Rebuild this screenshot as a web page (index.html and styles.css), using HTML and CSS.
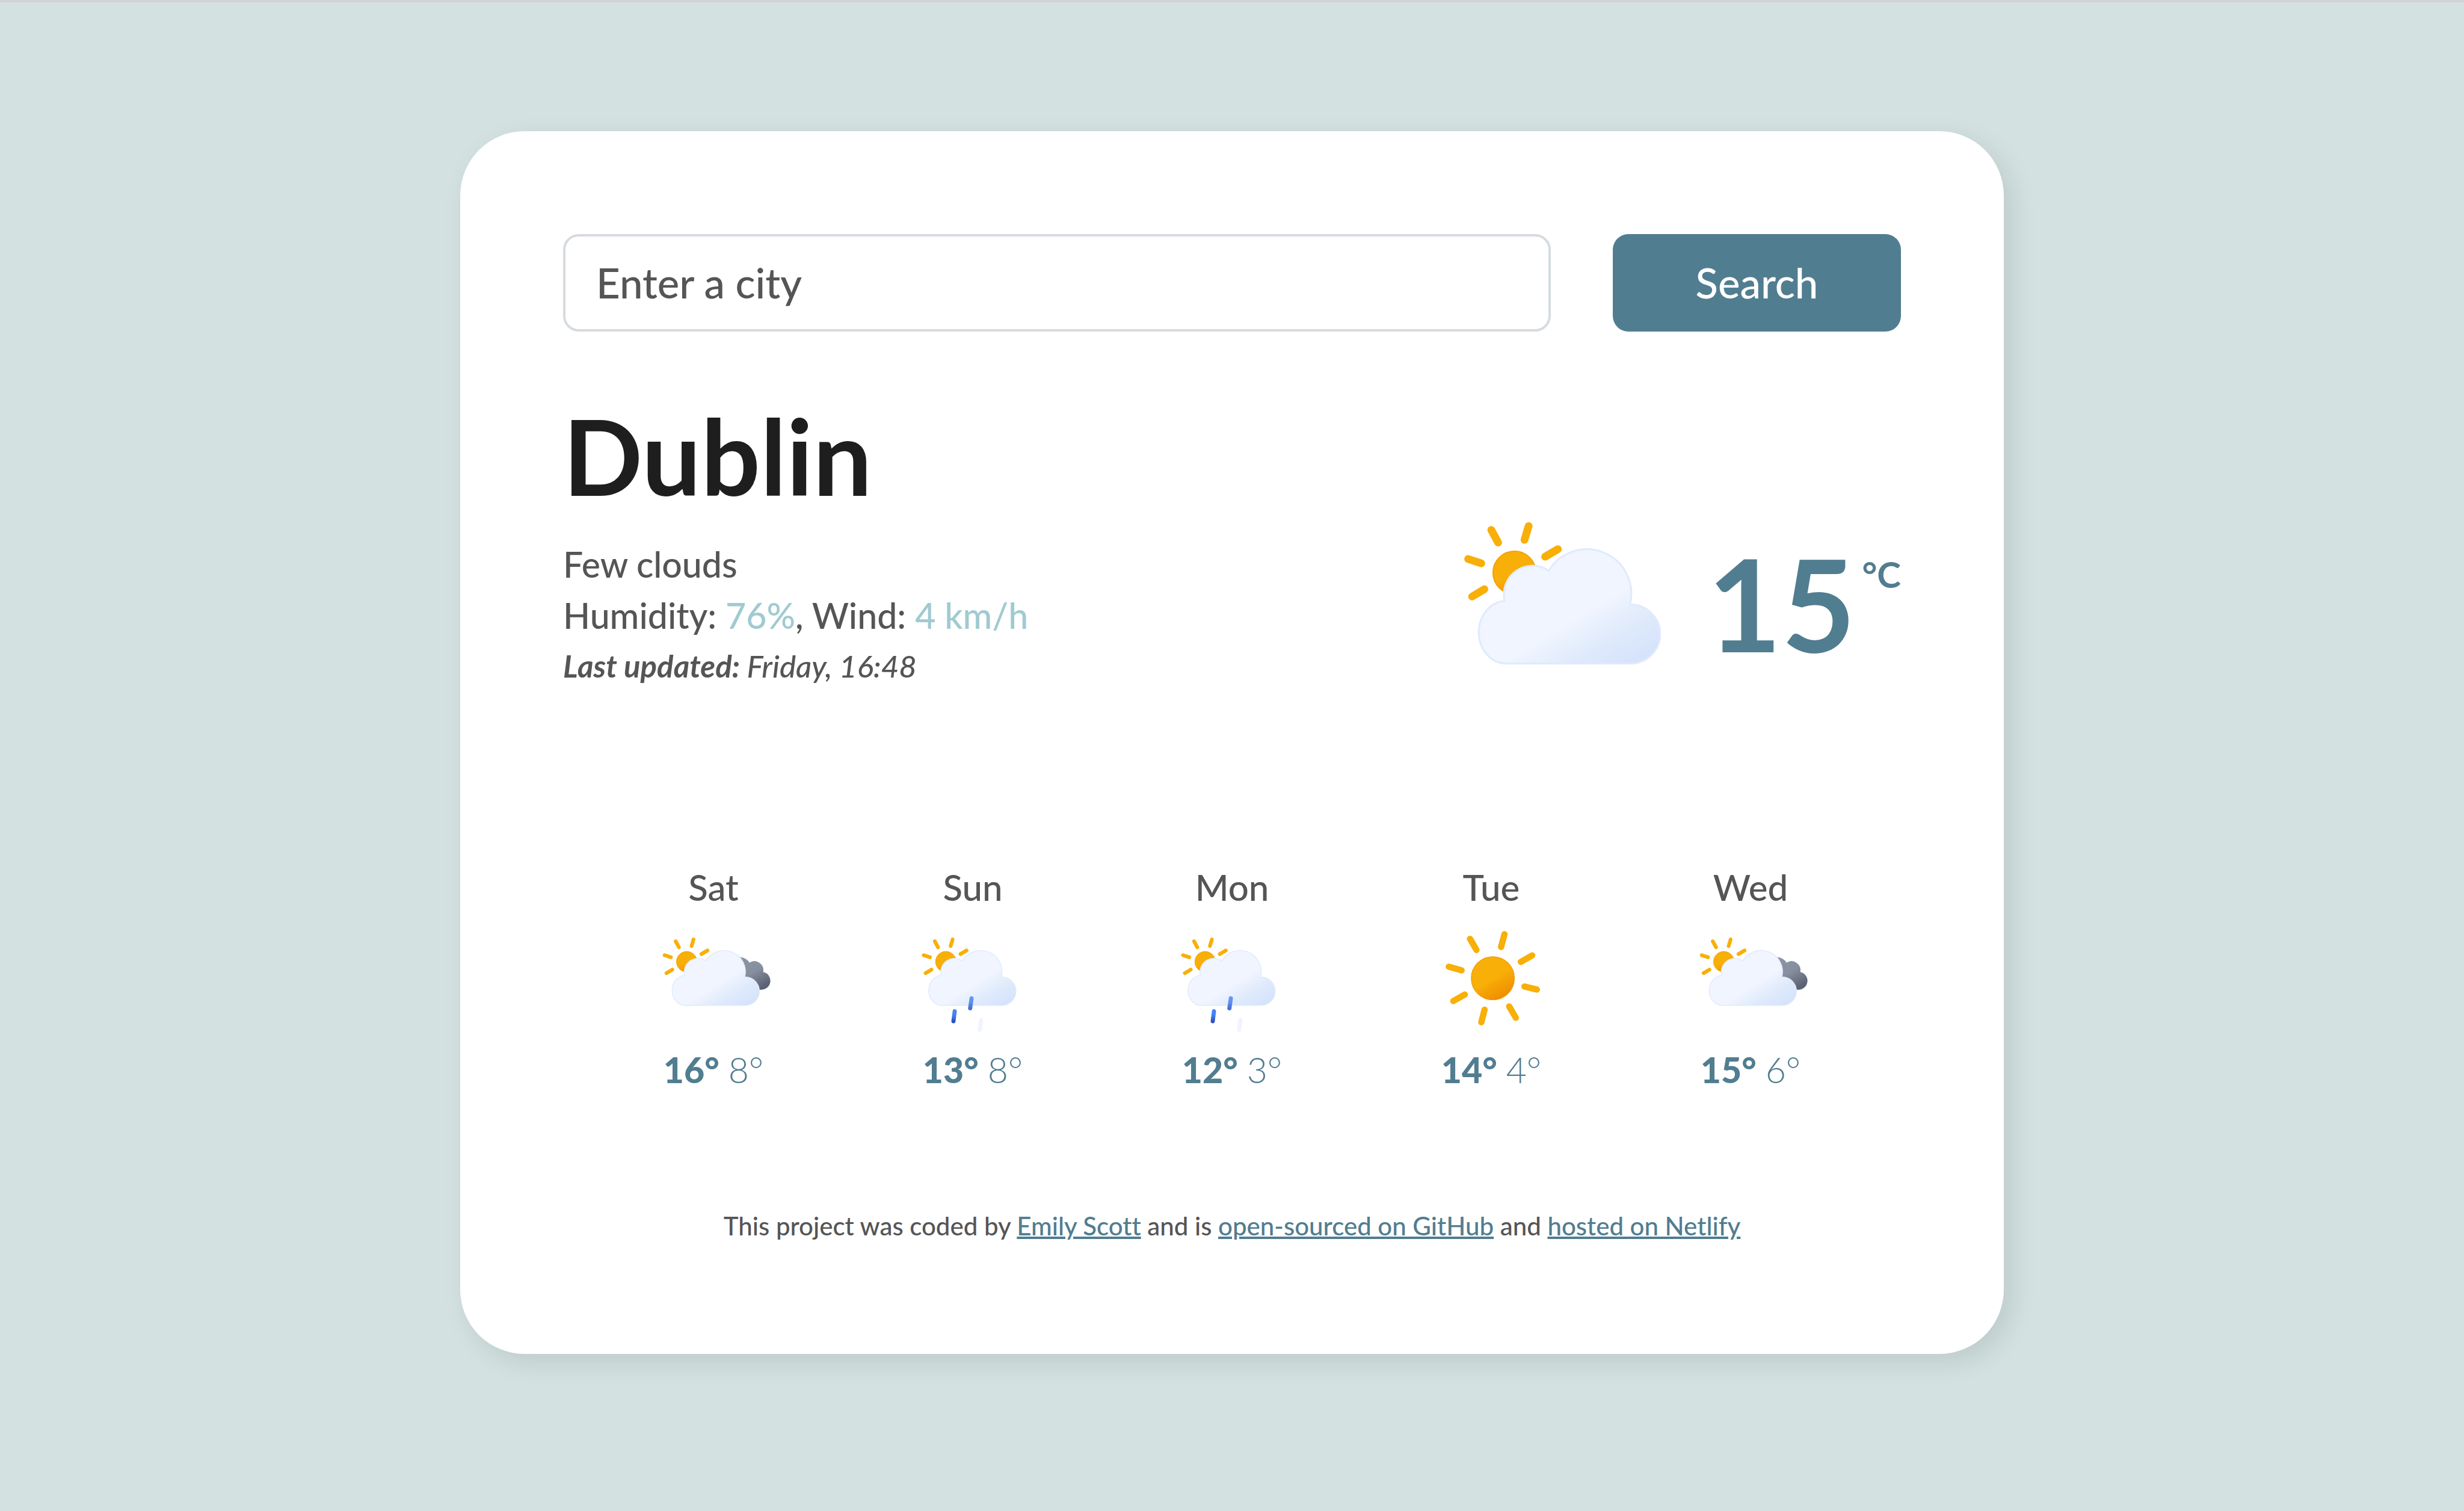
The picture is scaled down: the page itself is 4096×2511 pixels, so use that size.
FILE: index.html
```html
<!DOCTYPE html>
<html lang="en">
<head>
<meta charset="utf-8">
<title>Weather</title>
<link rel="stylesheet" href="styles.css">
</head>
<body>
<svg class="defs" aria-hidden="true">
  <defs>
    <linearGradient id="cloud" gradientUnits="userSpaceOnUse" x1="690" y1="670" x2="889" y2="995">
      <stop offset="0" stop-color="#f0f5ff"/><stop offset="0.5" stop-color="#dfeafb"/><stop offset="1" stop-color="#d5e3fb"/>
    </linearGradient>
    <linearGradient id="sun" x1="0.25" y1="0.07" x2="0.75" y2="0.93">
      <stop offset="0" stop-color="#f8af07"/><stop offset="0.5" stop-color="#f8af07"/><stop offset="1" stop-color="#ef8d00"/>
    </linearGradient>
    <linearGradient id="dark" x1="0.25" y1="0.07" x2="0.75" y2="0.93">
      <stop offset="0" stop-color="#8a94a3"/><stop offset="0.45" stop-color="#868f9e"/><stop offset="1" stop-color="#5b6273"/>
    </linearGradient>
    <linearGradient id="rain" x1="0" y1="0" x2="0" y2="1">
      <stop offset="0" stop-color="#4286f4"/><stop offset="0.4" stop-color="#4380f0"/><stop offset="1" stop-color="#2a52c0"/>
    </linearGradient>
    <linearGradient id="rain-light" x1="0" y1="0" x2="0" y2="1">
      <stop offset="0" stop-color="#6496f6"/><stop offset="0.4" stop-color="#5f8ff2"/><stop offset="1" stop-color="#456fd0"/>
    </linearGradient>
    <g id="half-sun">
      <circle cx="385" cy="390" r="120" fill="url(#sun)" stroke="#f5a000" stroke-width="6"/>
      <path d="M256 152 294 222M464 130 441 207M627 259 556 301M127 314 200 338M149 523 217 482" fill="none" stroke="#f8af07" stroke-width="43" stroke-linecap="round"/>
    </g>
    <path id="cloud-shape" d="M347 896A152 174 0 0 1 330 548A160 160 0 0 1 576 379A248 248 0 0 1 1029 567A166 164 0 0 1 1033 896Z" fill="url(#cloud)" stroke="#e0eafb" stroke-width="10" stroke-linejoin="round"/>
    <symbol id="few-clouds" viewBox="105 107 1096 796">
      <use href="#half-sun"/>
      <use href="#cloud-shape"/>
    </symbol>
    <symbol id="broken-clouds" viewBox="8 0 720 720">
      <use href="#half-sun" transform="translate(34 59) scale(0.477)"/>
      <path d="M500 220A66 66 0 0 1 567 250A50 50 0 0 1 643 302A50 50 0 0 1 632 401H520Z" fill="url(#dark)"/>
      <use href="#cloud-shape" transform="translate(47 58) scale(0.48)"/>
    </symbol>
    <symbol id="rain-cloud" viewBox="8 0 720 720">
      <use href="#half-sun" transform="translate(33 59) scale(0.477)"/>
      <use href="#cloud-shape" transform="translate(32 58) scale(0.48)"/>
      <g fill="none" stroke-width="23" stroke-linecap="round">
        <path d="M266 521 259 576" stroke="url(#rain)"/>
        <path d="M360 449 352 504" stroke="url(#rain-light)"/>
        <path d="M413 570 406 624" stroke="#eff4fe"/>
      </g>
    </symbol>
    <symbol id="clear-sky" viewBox="8 0 720 720">
      <circle cx="375" cy="337" r="120" fill="url(#sun)" stroke="#f39b00" stroke-width="4"/>
      <path d="M248 118 284 180M440 92 421 163M594 210 531 246M551 383 620 400M466 494 503 557M329 512 311 582M219 428 155 464M130 273 201 293" fill="none" stroke="#f8af07" stroke-width="35" stroke-linecap="round"/>
    </symbol>
  </defs>
</svg>
<main class="card">
  <form class="search">
    <input class="search-input" type="text" placeholder="Enter a city" aria-label="City">
    <button class="search-button" type="button">Search</button>
  </form>
  <section class="current">
    <div class="details">
      <h1 class="city">Dublin</h1>
      <p class="line">Few clouds</p>
      <p class="line">Humidity: <span class="value">76%</span>, Wind: <span class="value">4 km/h</span></p>
      <p class="updated"><strong>Last updated:</strong> Friday, 16:48</p>
    </div>
    <div class="reading">
      <svg class="reading-icon" role="img" aria-label="Few clouds"><use href="#few-clouds"/></svg>
      <span class="temperature">15</span>
      <span class="unit">°C</span>
    </div>
  </section>
  <section class="forecast">
    <div class="day">
      <div class="day-name">Sat</div>
      <svg class="day-icon" role="img" aria-label="Broken clouds"><use href="#broken-clouds"/></svg>
      <div class="temps"><span class="high">16°</span> <span class="low">8°</span></div>
    </div>
    <div class="day">
      <div class="day-name">Sun</div>
      <svg class="day-icon" role="img" aria-label="Rain"><use href="#rain-cloud"/></svg>
      <div class="temps"><span class="high">13°</span> <span class="low">8°</span></div>
    </div>
    <div class="day">
      <div class="day-name">Mon</div>
      <svg class="day-icon" role="img" aria-label="Rain"><use href="#rain-cloud"/></svg>
      <div class="temps"><span class="high">12°</span> <span class="low">3°</span></div>
    </div>
    <div class="day">
      <div class="day-name">Tue</div>
      <svg class="day-icon" role="img" aria-label="Clear sky"><use href="#clear-sky"/></svg>
      <div class="temps"><span class="high">14°</span> <span class="low">4°</span></div>
    </div>
    <div class="day">
      <div class="day-name">Wed</div>
      <svg class="day-icon" role="img" aria-label="Broken clouds"><use href="#broken-clouds"/></svg>
      <div class="temps"><span class="high">15°</span> <span class="low">6°</span></div>
    </div>
  </section>
  <footer class="credits">This project was coded by <a href="#">Emily Scott</a> and is <a href="#">open-sourced on GitHub</a> and <a href="#">hosted on Netlify</a></footer>
</main>
</body>
</html>
```
FILE: styles.css
```css
* { box-sizing: border-box; }
body {
  margin: 0;
  min-height: 100vh;
  padding: 214px 64px 64px;
  border-top: 4px solid #d2d3d5;
  background: #d3e1e1;
  color: #555;
  font-family: Lato, sans-serif;
  font-size: 60px;
  font-weight: 500;
  font-variant-ligatures: no-common-ligatures;
}
.defs { position: absolute; width: 0; height: 0; }
.card {
  max-width: 2566px;
  margin: 0 auto;
  padding: 171px 171px 187px;
  border-radius: 107px;
  background: #fff;
  box-shadow: 13px 13px 43px rgba(0, 0, 0, 0.1);
}
.search { display: flex; gap: 103px; }
.search-input {
  flex: 1;
  min-width: 0;
  height: 162px;
  padding: 0 51px 2px;
  border: 4px solid #d6dbdf;
  border-radius: 26px;
  background: #fff;
  color: #555;
  font: inherit;
  font-size: 69px;
}
.search-input::placeholder { color: #555; opacity: 1; }
.search-button {
  width: 479px;
  padding: 0 0 2px;
  border: 0;
  border-radius: 26px;
  background: #517d90;
  color: #fff;
  font: inherit;
  font-size: 69px;
}
.current { display: flex; justify-content: space-between; align-items: flex-end; margin-top: 104px; }
.city { margin: 0 0 36px; color: #1e1e1e; font-size: 174px; line-height: 204px; font-weight: 700; }
.line { margin: 0; font-size: 59px; line-height: 85px; }
.value { color: #a1cad1; }
.updated { margin: 0; font-size: 51px; line-height: 84px; font-style: italic; }
.reading { display: flex; align-items: flex-start; margin-bottom: 12px; color: #517d90; font-weight: 700; }
.reading-icon { width: 327px; height: 238px; }
.temperature { margin-left: 77px; font-size: 212px; line-height: 270px; }
.unit { margin: 47px 0 0 11px; line-height: 80px; }
.forecast { display: grid; grid-template-columns: repeat(5, 431px); justify-content: center; margin-top: 289px; text-align: center; }
.day-name { line-height: 72px; }
.day-icon { display: block; width: 215px; height: 215px; margin: 15px auto 2px; }
.temps { color: #517d90; font-size: 59px; line-height: 72px; }
.high { font-weight: 900; }
.low { font-weight: 300; }
.credits { margin-top: 197px; font-size: 42px; line-height: 52px; text-align: center; }
.credits a { color: #517d90; text-decoration-thickness: 4px; }
```
